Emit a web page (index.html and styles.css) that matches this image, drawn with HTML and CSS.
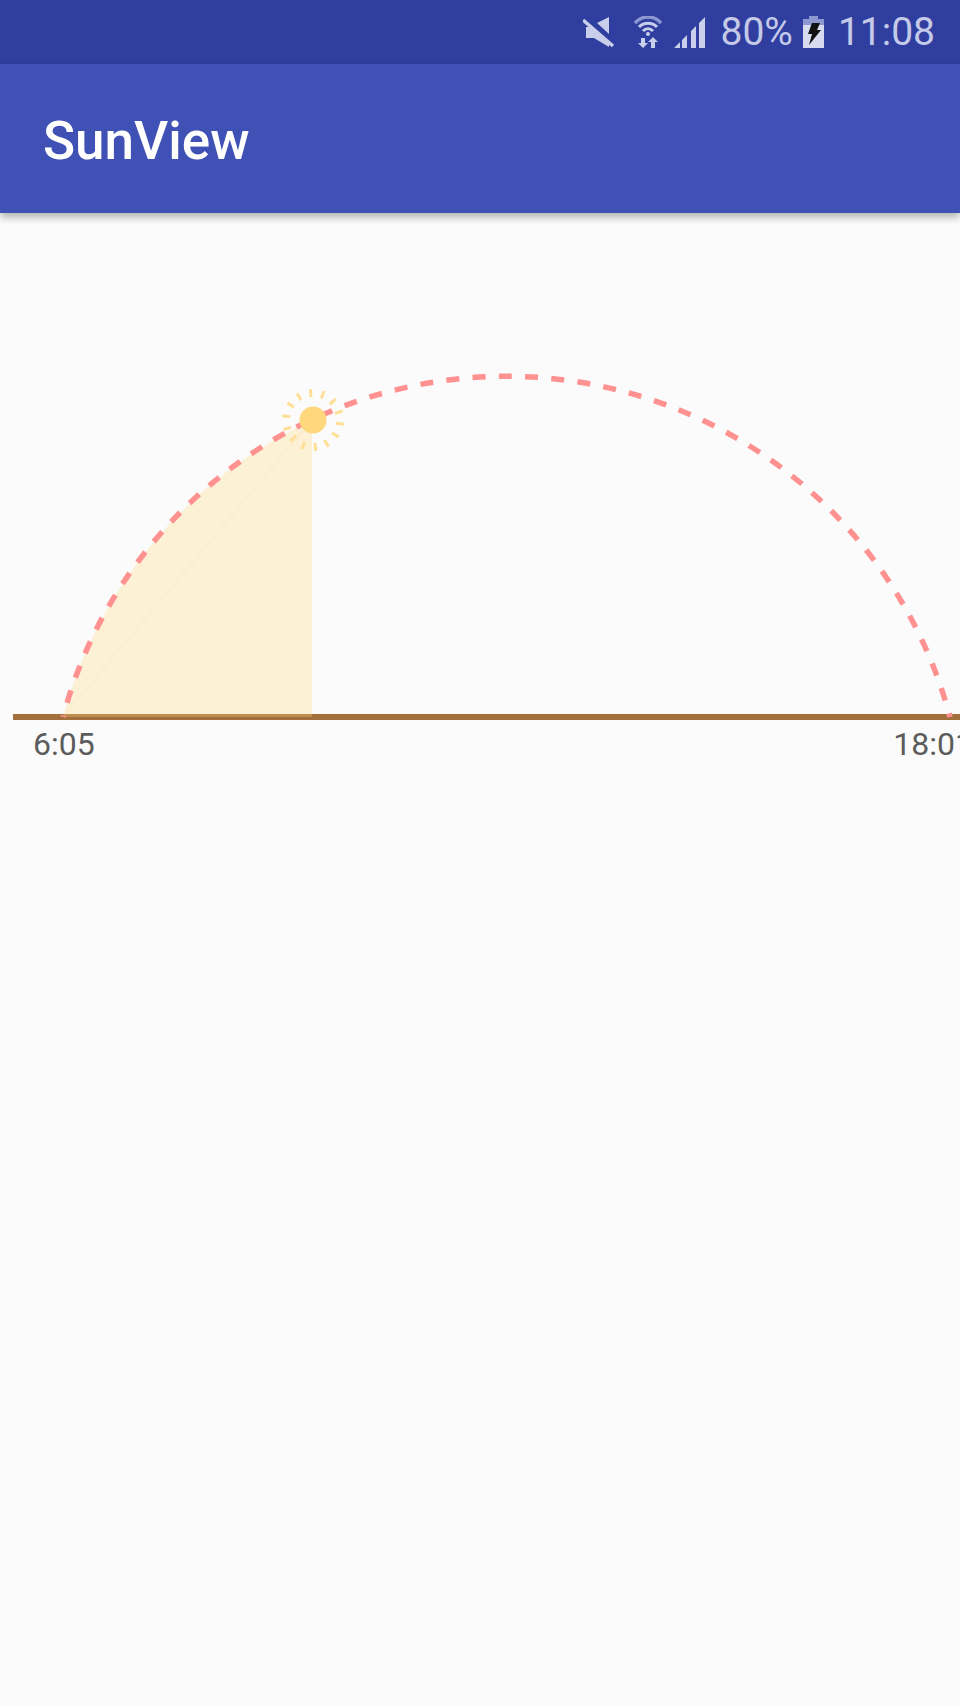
FILE: index.html
```html
<!DOCTYPE html>
<html lang="en">
<head>
    <meta charset="UTF-8">
    <meta name="viewport" content="width=device-width, initial-scale=1.0">
    <title>SunView</title>
    <link rel="stylesheet" href="styles.css">
</head>
<body>
    <div class="status-bar">
        <svg class="icon-mute" viewBox="0 0 32 32">
            <path class="icon-fill" d="M26 1 L26 18 L14 7 Z M3 11 L9 11 L26 27 L26 31 L11 22 L3 22 Z"/>
            <path class="mute-gap" d="M2 2 L30 27"/>
            <path class="icon-line" d="M0 4 L30 30"/>
        </svg>
        <svg class="icon-wifi" viewBox="0 0 28 32">
            <path class="wifi-outer" d="M1 7 C8 -1 20 -1 27 7"/>
            <path class="wifi-arc" d="M5 11 C10 6 18 6 23 11 M9 15 C12 12 16 12 19 15"/>
            <circle class="icon-fill" cx="14" cy="18" r="2"/>
            <path class="icon-fill" d="M7 22 h4 v5 h3 l-5 5 l-5 -5 h3 Z M17 32 v-6 h-3 l5 -5 l5 5 h-3 v6 Z"/>
        </svg>
        <svg class="icon-signal" viewBox="0 0 33 32">
            <path class="icon-fill" d="M1 32 L7 26 L7 32 Z M9 24 L14 19 L14 32 L9 32 Z M18 15 L23 10 L23 32 L18 32 Z M26 7 L32 1 L32 32 L26 32 Z"/>
        </svg>
        <span class="status-text status-battery">80%</span>
        <svg class="icon-battery" viewBox="0 0 21 32">
            <path class="battery-top" d="M6 0 H15 V3 H21 V9 H0 V3 H6 Z"/>
            <rect class="battery-body" x="0" y="9" width="21" height="23"/>
            <path class="battery-bolt" d="M9 7 L17 7 L14 14 L18 14 L6 29 L9 18 L5 18 Z"/>
        </svg>
        <span class="status-text status-time">11:08</span>
    </div>

    <header class="app-bar">
        <h1 class="app-title">SunView</h1>
    </header>

    <main class="content">
        <svg class="sun-chart" viewBox="0 0 960 510" width="960" height="510">
            <!-- chart origin is y=213 on the page -->
            <rect class="ground" x="13" y="501" width="947" height="6"/>
            <path class="sun-area" d="M63 504 A459 459 0 0 1 312 207 L312 504 Z"/>
            <path class="sun-chord" d="M63 504 L312 207"/>
            <path class="sun-path" d="M63 504 A459 459 0 0 1 950 504"/>
            <g class="sun" transform="translate(313 207)">
                <circle class="sun-core" r="13.500"/>
                <g class="sun-rays">
                    <line y1="-23" y2="-31" transform="rotate(-5)"/>
                    <line y1="-23" y2="-31" transform="rotate(21)"/>
                    <line y1="-23" y2="-31" transform="rotate(47)"/>
                    <line y1="-23" y2="-31" transform="rotate(73)"/>
                    <line y1="-23" y2="-31" transform="rotate(98)"/>
                    <line y1="-23" y2="-31" transform="rotate(124)"/>
                    <line y1="-23" y2="-31" transform="rotate(150)"/>
                    <line y1="-23" y2="-31" transform="rotate(175)"/>
                    <line y1="-23" y2="-31" transform="rotate(201)"/>
                    <line y1="-23" y2="-31" transform="rotate(227)"/>
                    <line y1="-23" y2="-31" transform="rotate(252)"/>
                    <line y1="-23" y2="-31" transform="rotate(278)"/>
                    <line y1="-23" y2="-31" transform="rotate(304)"/>
                    <line y1="-23" y2="-31" transform="rotate(329)"/>
                </g>
            </g>
        </svg>
        <div class="sun-times">
            <span>6:05</span>
            <span>18:01</span>
        </div>
    </main>
</body>
</html>
```

FILE: styles.css
```css
html, body {
    margin: 0;
    padding: 0;
    height: 100%;
    overflow: hidden;
}
body {
    font-family: Roboto, "Liberation Sans", sans-serif;
    background-color: #fbfbfb;
    width: 960px;
    height: 1706px;
}
.status-bar {
    height: 64px;
    background-color: #303f9f;
    display: flex;
    align-items: center;
    justify-content: flex-end;
    padding-right: 25px;
}
.status-bar svg {
    height: 32px;
    display: block;
}
.icon-mute { width: 32px; }
.icon-wifi { width: 28px; margin-left: 19px; }
.icon-signal { width: 33px; margin-left: 11px; }
.icon-battery { width: 21px; margin-left: 10px; }
.icon-fill { fill: #c9cfea; }
.icon-line {
    stroke: #c9cfea;
    stroke-width: 3.500;
    fill: none;
}
.mute-gap {
    stroke: #303f9f;
    stroke-width: 3;
    fill: none;
}
.wifi-outer {
    stroke: #8c98d2;
    stroke-width: 3.500;
    fill: none;
}
.wifi-arc {
    stroke: #c9cfea;
    stroke-width: 3;
    fill: none;
}
.battery-top { fill: #8c98d2; }
.battery-body { fill: #d7dbef; }
.battery-bolt { fill: #111; }
.status-text {
    font-size: 39px;
    color: #c5cae9;
    line-height: 64px;
}
.status-battery { margin-left: 14px; }
.status-time { margin-left: 14px; }
.app-bar {
    height: 145px;
    padding-top: 4px;
    background-color: #3f51b5;
    box-shadow: 0 4px 8px rgba(0, 0, 0, 0.3);
    display: flex;
    align-items: center;
    padding-left: 43px;
    position: relative;
}
.app-title {
    margin: 0;
    font-size: 53px;
    font-weight: 500;
    color: #fff;
}
.content {
    display: flex;
    flex-direction: column;
}
.sun-chart {
    display: block;
}
.ground { fill: #a26f3d; }
.sun-area { fill: rgba(255, 214, 125, 0.3); }
.sun-chord {
    stroke: rgba(255, 214, 130, 0.1);
    stroke-width: 2;
    fill: none;
}
.sun-path {
    fill: none;
    stroke: #ff9191;
    stroke-width: 5.500;
    stroke-dasharray: 13 13.300;
    stroke-dashoffset: -14.900;
}
.sun-core { fill: #ffd77c; }
.sun-rays line {
    stroke: #ffdf95;
    stroke-width: 3;
}
.sun-times {
    display: flex;
    justify-content: space-between;
    width: 940px;
    margin-top: 2px;
    padding-left: 33px;
    font-size: 32px;
    line-height: 38px;
    color: #5c5c5c;
}
```
